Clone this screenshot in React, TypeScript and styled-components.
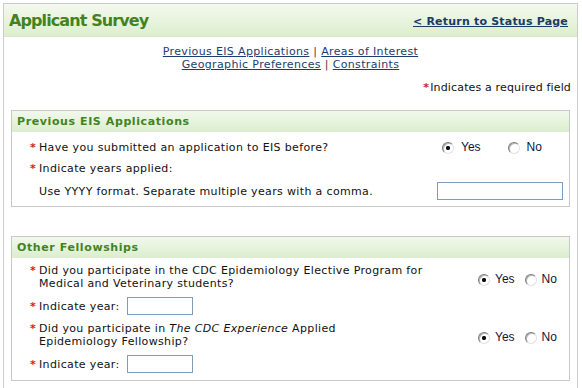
import { createGlobalStyle } from 'styled-components';
import styled from 'styled-components';

const GlobalStyle = createGlobalStyle`
  html, body {
    margin: 0;
    padding: 0;
    background: #ffffff;
  }
  body {
    font-family: Verdana, "DejaVu Sans", sans-serif;
    font-size: 11px;
    letter-spacing: 0.35px;
    color: #111111;
  }
`;

const Page = styled.div`
  margin: 3px 4px 0 3px;
  border: 1px solid #cccccc;
  border-bottom: none;
  min-height: 390px;
`;

const TitleBar = styled.div`
  height: 32px;
  display: flex;
  align-items: center;
  justify-content: space-between;
  padding: 0 9px 0 5px;
  background: linear-gradient(to bottom, #f3f9ee 0%, #e6f3dc 60%, #dceecd 100%);
  border-bottom: 1px solid #d6e8c8;
`;

const Title = styled.h1`
  margin: 0;
  font-size: 16px;
  font-weight: bold;
  letter-spacing: -0.9px;
  color: #43831f;
`;

const ReturnLink = styled.a`
  font-size: 11px;
  font-weight: bold;
  letter-spacing: 0.2px;
  color: #1b3a68;
  text-decoration: underline;
  margin-top: 2px;
`;

const Nav = styled.div`
  margin-top: 8px;
  text-align: center;
  line-height: 13px;
`;

const NavLink = styled.a`
  color: #1d3d6e;
  text-decoration: underline;
`;

const Sep = styled.span`
  color: #6a2a4a;
`;

const RequiredNote = styled.div`
  margin-top: 10px;
  margin-bottom: 16px;
  display: flex;
  justify-content: flex-end;
  gap: 1px;
  padding-right: 6px;
  line-height: 13px;
  letter-spacing: 0.15px;
`;

const Star = styled.span`
  color: #cc1f1f;
  font-weight: bold;
`;

const Section = styled.div`
  margin: 0 7px;
  border: 1px solid #c9c9c9;
  & + & {
    margin-top: 29px;
  }
`;

const SectionTitle = styled.div`
  height: 21px;
  display: flex;
  align-items: center;
  padding-left: 5px;
  font-weight: bold;
  letter-spacing: 0.6px;
  color: #43831f;
  background: linear-gradient(to bottom, #f1f8ec 0%, #e4f2da 60%, #dbeecd 100%);
`;

const SectionBody = styled.div<{ $top: number; $bottom: number }>`
  display: flex;
  flex-direction: column;
  gap: 7px;
  padding: ${p => p.$top}px 6px ${p => p.$bottom}px 18px;
`;

const Row = styled.div<{ $control: number; $tall?: boolean }>`
  display: grid;
  grid-template-columns: 1fr ${p => p.$control}px;
  align-items: center;
  min-height: ${p => (p.$tall ? 16 : 13)}px;
  line-height: 13px;
`;

const Label = styled.div`
  display: flex;
  align-items: center;
  gap: 7px;
`;

const Question = styled.div<{ $required?: boolean }>`
  display: grid;
  grid-template-columns: 9px auto;
  align-items: start;
  & > :first-child {
    visibility: ${p => (p.$required ? 'visible' : 'hidden')};
  }
`;

const Choices = styled.div<{ $gap: number; $pad: number; $drop: number }>`
  display: flex;
  align-items: center;
  gap: ${p => p.$gap}px;
  padding-left: ${p => p.$pad}px;
  margin-top: ${p => p.$drop}px;
`;

const Choice = styled.label<{ $space: number }>`
  display: flex;
  align-items: center;
  gap: ${p => p.$space}px;
  font-family: Arial, "Liberation Sans", sans-serif;
  font-size: 12px;
  letter-spacing: 0;
  color: #141438;
`;

const Radio = styled.input.attrs({ type: 'radio' })`
  appearance: none;
  -webkit-appearance: none;
  margin: 0;
  width: 12px;
  height: 12px;
  border-radius: 50%;
  border: 1px solid;
  border-color: #7c7c7c #e2e2e2 #e2e2e2 #7c7c7c;
  box-shadow: inset 1px 1px 0 #b5b5b5;
  background: #ffffff;
  &:checked {
    background: radial-gradient(circle, #111111 0 1.8px, #ffffff 2.4px);
  }
`;

const TextBox = styled.input.attrs({ type: 'text' })<{ $w: number }>`
  box-sizing: border-box;
  width: ${p => p.$w}px;
  height: 18px;
  margin: 0;
  padding: 1px 3px;
  border: 1px solid #7f9db9;
  font: inherit;
  background: #ffffff;
`;

const YesNo = ({ name, gap, pad, space, drop }: { name: string; gap: number; pad: number; space: number; drop: number }) => (
  <Choices $gap={gap} $pad={pad} $drop={drop}>
    <Choice $space={space}>
      <Radio name={name} defaultChecked />
      Yes
    </Choice>
    <Choice $space={space}>
      <Radio name={name} />
      No
    </Choice>
  </Choices>
);

const Ask = ({ children, required = true }: { children: React.ReactNode; required?: boolean }) => (
  <Question $required={required}>
    <Star>*</Star>
    <span>{children}</span>
  </Question>
);

export default function App() {
  return (
    <>
      <GlobalStyle />
      <Page>
        <TitleBar>
          <Title>Applicant Survey</Title>
          <ReturnLink href="#">&lt; Return to Status Page</ReturnLink>
        </TitleBar>

        <Nav>
          <NavLink href="#">Previous EIS Applications</NavLink> <Sep>|</Sep>{' '}
          <NavLink href="#">Areas of Interest</NavLink>
          <br />
          <NavLink href="#">Geographic Preferences</NavLink> <Sep>|</Sep>{' '}
          <NavLink href="#">Constraints</NavLink>
        </Nav>

        <RequiredNote>
          <Star>*</Star>
          <span>Indicates a required field</span>
        </RequiredNote>

        <Section>
          <SectionTitle>Previous EIS Applications</SectionTitle>
          <SectionBody $top={7} $bottom={6}>
            <Row $control={126} $tall>
              <Ask>Have you submitted an application to EIS before?</Ask>
              <YesNo name="prev" gap={27} pad={5} space={7} drop={1} />
            </Row>
            <Row $control={126}>
              <Ask>Indicate years applied:</Ask>
            </Row>
            <Row $control={126}>
              <Ask required={false}>Use YYYY format. Separate multiple years with a comma.</Ask>
              <TextBox $w={126} />
            </Row>
          </SectionBody>
        </Section>

        <Section>
          <SectionTitle>Other Fellowships</SectionTitle>
          <SectionBody $top={6} $bottom={7}>
            <Row $control={90}>
              <Ask>
                Did you participate in the CDC Epidemiology Elective Program for
                <br />
                Medical and Veterinary students?
              </Ask>
              <YesNo name="epp" gap={10} pad={5} space={5} drop={5} />
            </Row>
            <Row $control={90}>
              <Label>
                <Ask>Indicate year:</Ask>
                <TextBox $w={66} />
              </Label>
            </Row>
            <Row $control={90}>
              <Ask>
                Did you participate in <i>The CDC Experience</i> Applied
                <br />
                Epidemiology Fellowship?
              </Ask>
              <YesNo name="cdcx" gap={10} pad={5} space={5} drop={5} />
            </Row>
            <Row $control={90}>
              <Label>
                <Ask>Indicate year:</Ask>
                <TextBox $w={66} />
              </Label>
            </Row>
          </SectionBody>
        </Section>
      </Page>
    </>
  );
}
